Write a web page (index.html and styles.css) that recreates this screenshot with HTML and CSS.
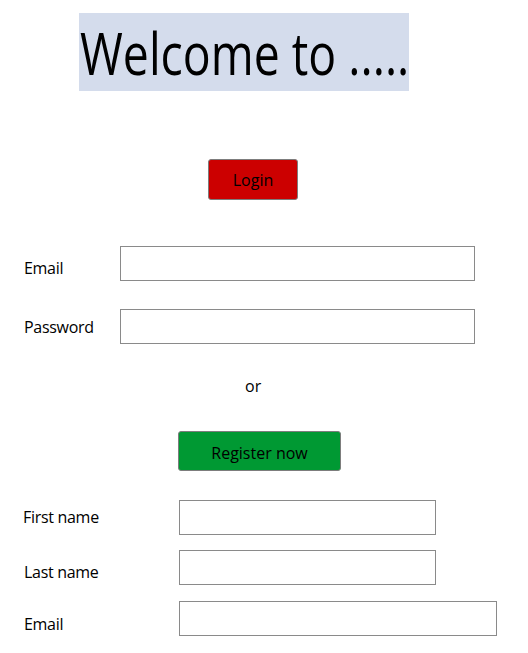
FILE: index.html
```html
<!DOCTYPE html>
<html>
<head>
<meta charset="utf-8">
<link rel="stylesheet" href="styles.css">
</head>
<body>
<div class="page">
  <div class="title-row"><h1 class="title"><span class="title-text">Welcome to .....</span></h1></div>
  <div class="login-row"><button class="btn btn-login">Login</button></div>
  <div class="form login-form">
    <div class="field"><label class="label">Email</label><input class="input input-wide" type="text"></div>
    <div class="field"><label class="label label-flat">Password</label><input class="input input-wide" type="text"></div>
  </div>
  <div class="or">or</div>
  <div class="register-row"><button class="btn btn-register">Register now</button></div>
  <div class="form reg-form">
    <div class="field reg-field f1"><label class="label label-flat">First name</label><input class="input input-mid" type="text"></div>
    <div class="field reg-field f2"><label class="label">Last name</label><input class="input input-mid" type="text"></div>
    <div class="field reg-field f3"><label class="label">Email</label><input class="input input-long" type="text"></div>
  </div>
</div>
</body>
</html>
```
FILE: styles.css
```css
html, body { margin: 0; padding: 0; background: #fff; }
body { font-family: "Open Sans", "Noto Sans", sans-serif; color: #000; }
.page { width: 528px; height: 653px; overflow: hidden; }
.title-row { padding: 13px 0 0 79px; }
.title {
  display: flex; align-items: center;
  margin: 0; width: 330px; height: 78px; box-sizing: border-box;
  padding-left: 1px;
  background: #d4dcec; font-weight: 400; font-size: 58px; line-height: 1;
  white-space: nowrap; overflow: hidden;
}
.title-text { display: inline-block; transform: scaleX(0.8); transform-origin: left center; margin-top: 2px; }
.login-row { padding: 68px 0 0 208px; }
.btn {
  font-family: inherit; font-size: 16px; color: #000;
  border: 1px solid #7d7d7d; border-radius: 3px; padding: 0;
  display: flex; align-items: center; justify-content: center;
}
.btn-login { width: 90px; height: 41px; background: #cc0000; }
.btn-register { width: 163px; height: 40px; background: #009933; padding-top: 3px; }
.form { display: flex; flex-direction: column; }
.login-form { padding: 46px 0 0 24px; gap: 28px; }
.field { display: flex; align-items: center; }
.label { font-size: 16px; letter-spacing: -0.3px; padding-top: 8px; }
.label-flat { padding-top: 0; }
.login-form .label { width: 96px; }
.input { box-sizing: border-box; height: 35px; border: 1px solid #8a8a8a; margin: 0; padding: 0; background: #fff; }
.input-wide { width: 355px; }
.or { padding: 30px 0 0 245px; font-size: 16px; height: 24px; line-height: 24px; }
.register-row { padding: 33px 0 0 178px; }
.reg-form { padding: 29px 0 0 23px; }
.reg-form .label { width: 156px; }
.f1 .label { padding-bottom: 2px; }
.f2 { margin-top: 15px; padding-left: 1px; }
.f2 .label { width: 155px; }
.f3 { margin-top: 16px; padding-left: 1px; }
.f3 .label { width: 155px; padding-top: 10px; }
.input-mid { width: 257px; }
.input-long { width: 318px; }
```
